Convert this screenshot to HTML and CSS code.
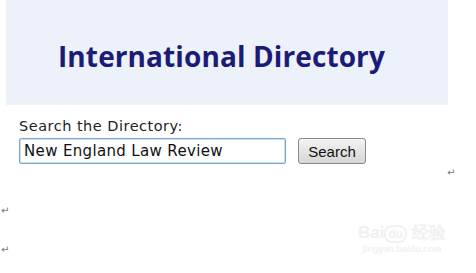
FILE: index.html
```html
<!DOCTYPE html>
<html lang="en">
<head>
  <meta charset="UTF-8" />
  <title>International Directory</title>
  <link rel="stylesheet" href="styles.css">
</head>
<body>
  <div class="banner">
    <h1>International Directory</h1>
  </div>

  <div class="search">
    <label for="q">Search the Directory:</label>
    <div class="search-row">
      <input type="text" id="q" value="New England Law Review" />
      <button>Search</button>
    </div>
  </div>

  <!-- paragraph marks -->
  <div class="mark mark-right">&#8629;</div>
  <div class="mark">&#8629;</div>
  <div class="mark mark-last">&#8629;</div>

  <div class="watermark">
    <div class="wm-top">Bai<span class="wm-du">du</span> 经验</div>
    <div class="wm-url">jingyan.baidu.com</div>
  </div>
</body>
</html>
```

FILE: styles.css
```css
body {
  margin: 0;
  background: #fff;
  font-family: 'DejaVu Sans', Verdana, sans-serif;
  width: 476px;
  height: 273px;
  overflow: hidden;
  position: relative;
}
.banner {
  margin-left: 6px;
  width: 442px;
  height: 105px;
  background: #edf1f9;
  box-sizing: border-box;
  padding: 39px 0 0 52px;
}
h1 {
  margin: 0;
  font-family: 'Open Sans', sans-serif;
  font-weight: bold;
  font-size: 28px;
  line-height: 34px;
  color: #1b1b78;
  letter-spacing: 0.1px;
}
.search {
  padding: 13px 0 0 19px;
}
label {
  display: block;
  font-size: 14.5px;
  line-height: 17px;
  letter-spacing: 0.5px;
  color: #222;
}
.search-row {
  display: flex;
  align-items: center;
  gap: 12px;
  margin-top: 3px;
}
input {
  width: 267px;
  height: 26px;
  box-sizing: border-box;
  border: 1px solid #7fa3d3;
  border-radius: 2px;
  padding: 0 4px;
  font-family: 'DejaVu Sans', Verdana, sans-serif;
  font-size: 15px;
  letter-spacing: 0.35px;
  color: #111;
  box-shadow: inset 0 0 0 1px #c9dcf3;
  outline: none;
}
button {
  width: 68px;
  height: 26px;
  box-sizing: border-box;
  border: 1px solid #8a8a8a;
  border-radius: 3px;
  background: linear-gradient(#f4f4f4, #e4e4e4 50%, #d6d6d6);
  font-family: 'Liberation Sans', Arial, sans-serif;
  font-size: 15px;
  color: #111;
  padding: 0;
}
.mark {
  font-size: 10px;
  line-height: 12px;
  color: #777;
  margin: 26px 0 0 1px;
}
.mark-right {
  margin: 3px 0 0 447px;
}
.mark-last {
  margin-top: 27px;
}
.watermark {
  position: absolute;
  left: 358px;
  top: 224px;
  color: #f1f1f1;
  font-family: 'Liberation Sans', Arial, sans-serif;
  text-align: center;
}
.wm-top {
  font-size: 17px;
  font-weight: bold;
  line-height: 18px;
}
.wm-du {
  font-size: 12px;
  border: 2px solid #f1f1f1;
  border-radius: 8px;
  padding: 0 2px;
}
.wm-url {
  font-size: 9px;
  line-height: 12px;
  font-weight: bold;
}
```
